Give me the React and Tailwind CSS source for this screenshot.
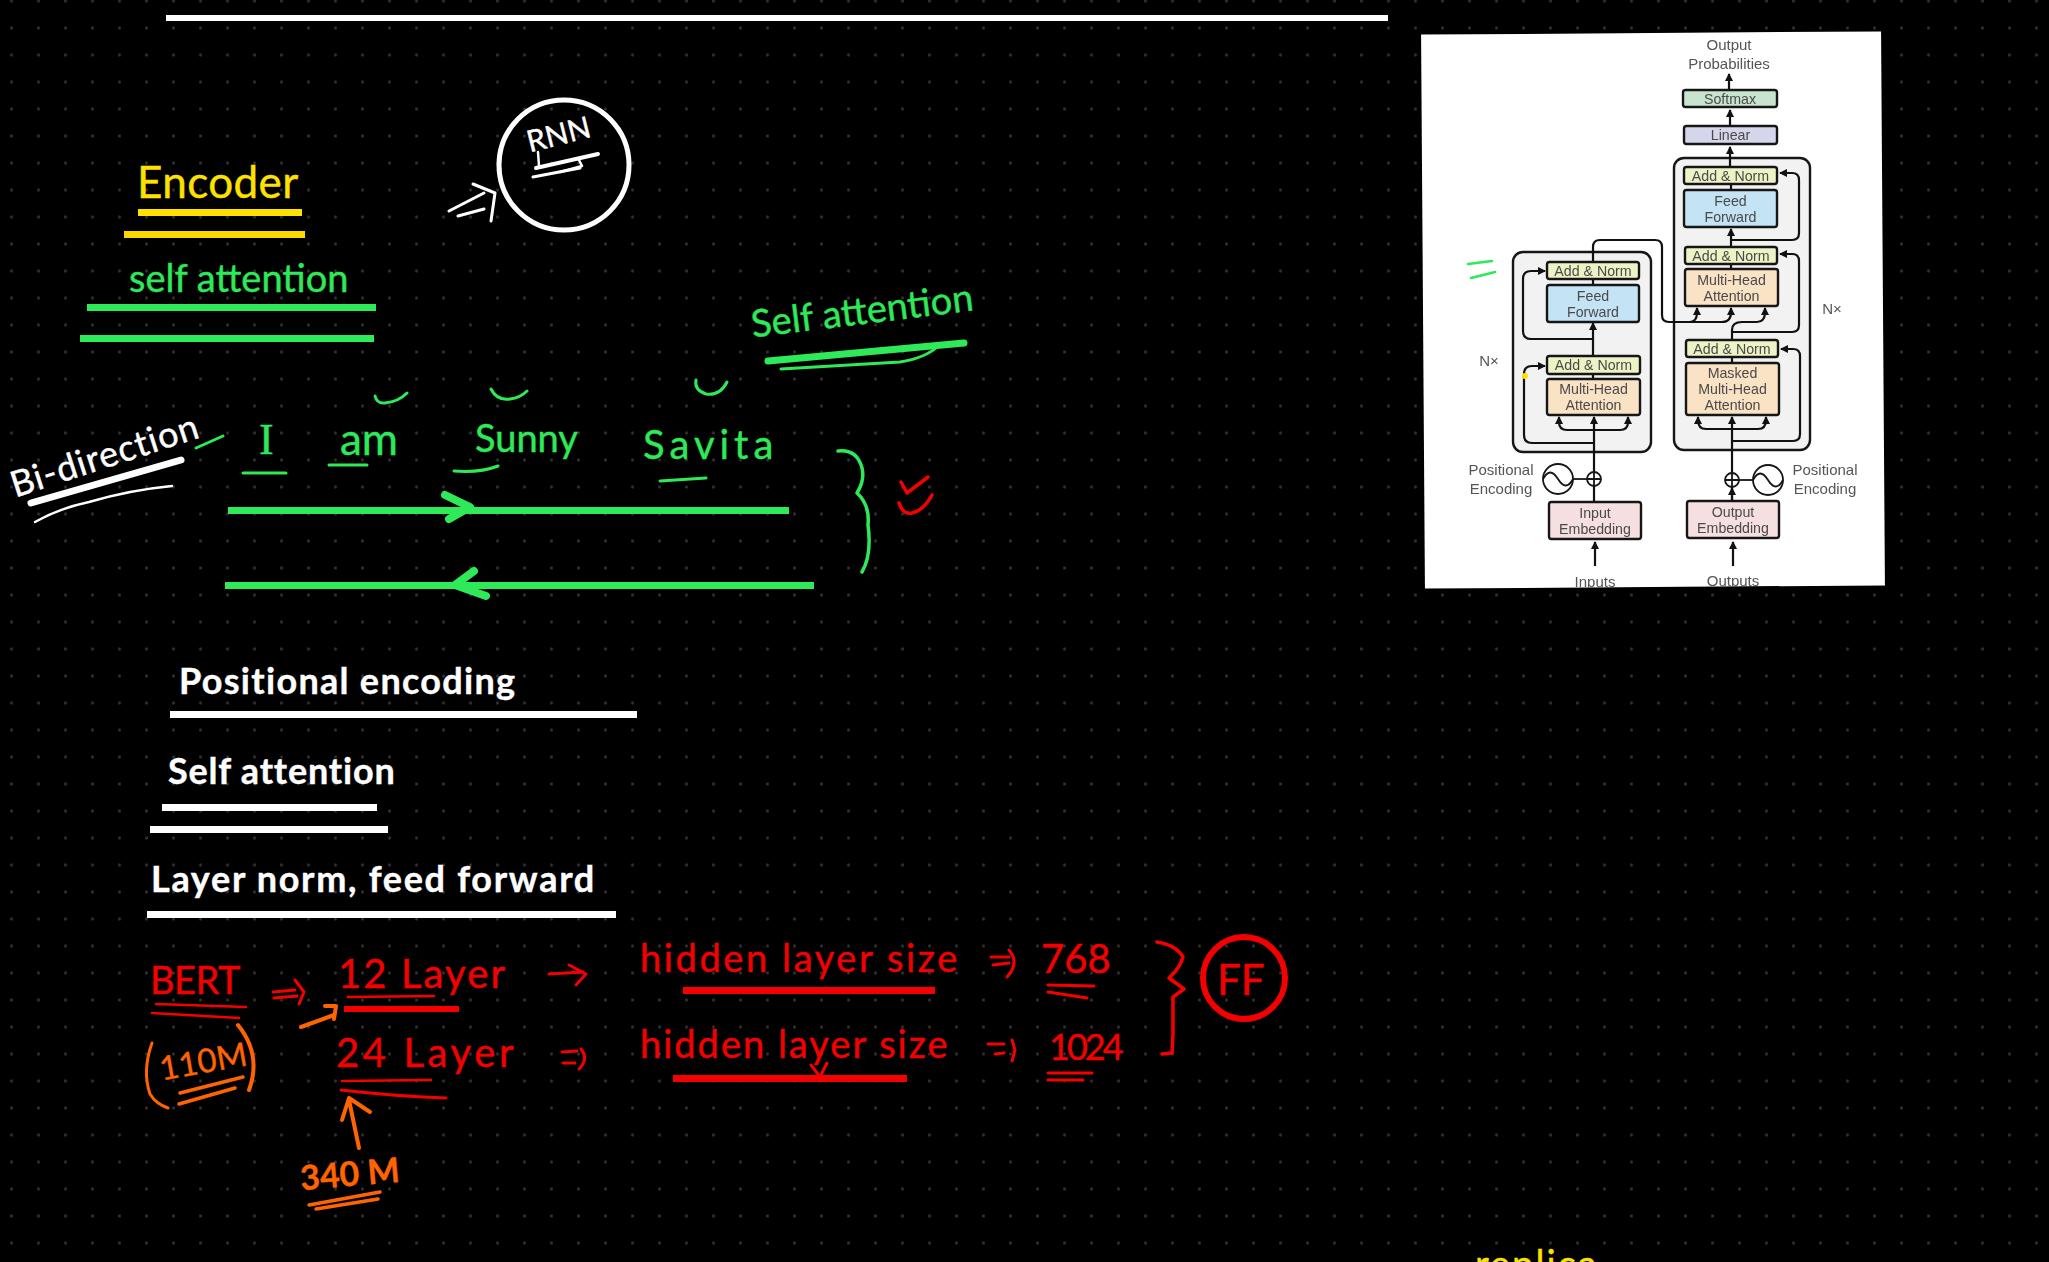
const ink = {
  yellow: '#ffe100',
  green: '#2ee958',
  red: '#f50000',
  orange: '#ff6400',
};

// freehand strokes on the board: [colour, width, path]
const strokes = [
  // rnn circle and arrow
  ['#fff', 4, 'M536 168 L598 154'],
  ['#fff', 2.5, 'M538 152 L539 166 M578 158 L582 166 L560 172'],
  ['#fff', 3, 'M533 177 L580 168'],
  ['#fff', 3, 'M449 211 L484 193 M458 216 L484 209 M473 184 L495 193 L491 221'],
  // bi-direction
  ['#fff', 7, 'M31 503 L181 460'],
  ['#fff', 2.5, 'M35 522 Q60 508 89 502 Q130 490 172 486'],
  [ink.green, 3, 'M196 448 L223 436'],
  // top right self attention
  [ink.green, 7, 'M768 361 L964 343'],
  [ink.green, 3, 'M781 369 Q850 365 900 362 Q925 358 937 347'],
  // ticks over the words
  [ink.green, 3, 'M375 396 Q377 404 385 403 Q398 402 407 393'],
  [ink.green, 3, 'M491 389 Q497 401 510 399 Q520 398 527 391'],
  [ink.green, 3, 'M696 380 Q694 390 706 394 Q720 396 727 382'],
  [ink.green, 3, 'M243 473 H286 M329 465 H367 M454 471 Q480 473 498 466 M660 481 L706 478'],
  // arrow heads on the long lines
  [ink.green, 8, 'M445 495 L470 507 L449 519'],
  [ink.green, 8, 'M474 571 L455 585 L486 596'],
  // brace + red ticks
  [ink.green, 3.5, 'M838 451 Q857 449 862 468 Q865 480 857 493 Q870 505 868 525 Q872 555 862 572'],
  [ink.red, 3.5, 'M901 482 L907 493 L928 477 M899 503 Q903 515 912 513 Q924 510 932 495'],
  // red row one
  [ink.red, 2.5, 'M156 1004 L246 1007 M152 1013 L239 1018'],
  [ink.red, 3, 'M273 992 L295 990 M274 998 L297 996 M295 980 L304 992 L299 1004'],
  [ink.red, 2.5, 'M348 997 L434 996'],
  [ink.red, 3, 'M549 974 L583 972 M569 965 L586 974 L576 985'],
  [ink.red, 3, 'M991 957 L1009 957 M993 965 L1009 963 M1009 950 Q1020 963 1007 977'],
  [ink.red, 3, 'M1048 985 L1094 986 M1048 992 L1087 998'],
  // red row two
  [ink.red, 2.5, 'M342 1081 L431 1080'],
  [ink.red, 3, 'M341 1090 Q391 1096 446 1098'],
  [ink.red, 3, 'M562 1052 L577 1051 M563 1063 L575 1063 M581 1049 Q589 1059 579 1069'],
  [ink.red, 3, 'M988 1044 L1004 1044 M995 1054 L1004 1053 M1012 1040 L1015 1050 L1012 1061'],
  [ink.red, 3, 'M811 1065 L820 1077 L827 1063'],
  [ink.red, 3, 'M1048 1073 H1092 M1048 1080 H1083'],
  [ink.red, 3.5, 'M1157 942 Q1176 945 1183 957 Q1180 968 1169 978 L1184 989 L1173 997 L1173 1033 L1172 1053 L1162 1054'],
  // orange
  [ink.orange, 4, 'M301 1027 L334 1015 M325 1006 L336 1006 L334 1019'],
  [ink.orange, 3, 'M152 1043 Q142 1071 150 1094 Q156 1104 168 1108'],
  [ink.orange, 4, 'M238 1025 Q262 1055 249 1090'],
  [ink.orange, 3.5, 'M180 1093 L243 1077 M179 1104 L235 1088'],
  [ink.orange, 4, 'M359 1148 L349 1100 M342 1120 L349 1098 L370 1112'],
  [ink.orange, 3.5, 'M309 1205 L380 1192 M316 1209 L378 1199'],
];

function Board() {
  return (
    <svg className="absolute inset-0" width="2049" height="1262" viewBox="0 0 2049 1262" fill="none">
      <ellipse cx="564" cy="165" rx="65" ry="65" stroke="#fff" strokeWidth="5" />
      <ellipse cx="1244" cy="978" rx="41" ry="41" stroke={ink.red} strokeWidth="6" />
      {strokes.map(([color, width, d], i) => (
        <path key={i} d={d} stroke={color} strokeWidth={width} strokeLinecap="round" strokeLinejoin="round" />
      ))}
    </svg>
  );
}

function Bar({ className }) {
  return <div className={`absolute ${className}`} />;
}

function Word({ className, children }) {
  return (
    <span className={`absolute whitespace-nowrap leading-none [-webkit-text-stroke:0.4px] font-['Lato','Noto_Sans',sans-serif] ${className}`}>
      {children}
    </span>
  );
}

function Box({ x, y, w, h, fill, lines }) {
  const cx = x + w / 2;
  const top = y + h / 2 - ((lines.length - 1) * 16) / 2 + 5;
  return (
    <g>
      <rect x={x} y={y} width={w} height={h} rx="2.5" fill={fill} stroke="#161616" strokeWidth="2.4" />
      {lines.map((line, i) => (
        <text key={line} x={cx} y={top + i * 16} textAnchor="middle" fontSize="14.2" fill="#4a4a4a">
          {line}
        </text>
      ))}
    </g>
  );
}

const add = '#eef3c6';
const blue = '#c4e3f5';
const peach = '#fae2c4';
const pink = '#f6dfe0';

// transformer figure, numbers are page coordinates
function Transformer() {
  const line = { stroke: '#111', strokeWidth: 2.2, fill: 'none', markerEnd: 'url(#head)' };
  const plain = { stroke: '#111', strokeWidth: 2.2, fill: 'none' };
  return (
    <svg
      className="absolute -left-[2px] top-0 rotate-[0.4deg] blur-[0.35px] font-['Liberation_Sans',Arial,sans-serif]"
      width="462"
      height="556"
      viewBox="1421 33 462 556"
    >
      <defs>
        <marker id="head" markerUnits="userSpaceOnUse" markerWidth="9" markerHeight="9" refX="7" refY="4" orient="auto">
          <path d="M0 0 L8 4 L0 8 Z" fill="#111" />
        </marker>
      </defs>

      <rect x="1513" y="252" width="138" height="200" rx="10" fill="#f2f2f2" stroke="#161616" strokeWidth="2.4" />
      <rect x="1674" y="158" width="136" height="292" rx="10" fill="#f2f2f2" stroke="#161616" strokeWidth="2.4" />

      <g>
        <path {...line} d="M1729 90 V74" />
        <path {...line} d="M1730 126 V110" />
        <path {...line} d="M1730 167 V147" />
        <path {...line} d="M1731 247 V229" />
        <path {...line} d="M1732 501 V417" />
        <path {...line} d="M1732 501 V488" />
        <path {...line} d="M1733 566 V542" />
        <path {...line} d="M1731 240 H1792 Q1799 240 1799 233 V180 Q1799 173 1792 173 H1780" />
        <path {...line} d="M1732 332 H1792 Q1799 332 1799 325 V261 Q1799 254 1792 254 H1780" />
        <path {...line} d="M1732 441 H1793 Q1800 441 1800 434 V356 Q1800 349 1793 349 H1781" />
        <path {...line} d="M1732 429 H1706 Q1698 429 1698 420 V417" />
        <path {...line} d="M1732 429 H1758 Q1766 429 1766 420 V417" />
        <path {...line} d="M1732 340 V330 Q1732 322 1742 322 H1757 Q1765 322 1765 312 V308" />
        <path {...line} d="M1593 262 V247 Q1593 240 1600 240 H1655 Q1662 240 1662 247 V315 Q1662 322 1669 322 H1722 Q1731 322 1731 312 V308" />
        <path {...line} d="M1690 322 Q1697 322 1697 312 V308" />

        <path {...line} d="M1593 356 V323" />
        <path {...plain} d="M1593 285 V279 M1593 379 V374 M1731 190 V184 M1731 269 V264 M1732 363 V357" />
        <path {...line} d="M1594 502 V417" />
        <path {...line} d="M1595 566 V542" />
        <path {...line} d="M1593 339 H1531 Q1523 339 1523 331 V279 Q1523 271 1531 271 H1545" />
        <path {...line} d="M1594 443 H1532 Q1524 443 1524 435 V374 Q1524 366 1532 366 H1545" />
        <path {...line} d="M1594 430 H1567 Q1559 430 1559 422 V417" />
        <path {...line} d="M1594 430 H1620 Q1628 430 1628 422 V417" />
      </g>

      <Box x={1683} y={90} w={94} h={17} fill="#c8e4cf" lines={['Softmax']} />
      <Box x={1684} y={126} w={93} h={18} fill="#d5d6ec" lines={['Linear']} />
      <Box x={1684} y={167} w={93} h={17} fill={add} lines={['Add & Norm']} />
      <Box x={1684} y={190} w={93} h={37} fill={blue} lines={['Feed', 'Forward']} />
      <Box x={1685} y={247} w={92} h={17} fill={add} lines={['Add & Norm']} />
      <Box x={1685} y={269} w={93} h={37} fill={peach} lines={['Multi-Head', 'Attention']} />
      <Box x={1686} y={340} w={92} h={17} fill={add} lines={['Add & Norm']} />
      <Box x={1686} y={363} w={93} h={52} fill={peach} lines={['Masked', 'Multi-Head', 'Attention']} />
      <Box x={1687} y={501} w={92} h={37} fill={pink} lines={['Output', 'Embedding']} />

      <Box x={1547} y={262} w={92} h={17} fill={add} lines={['Add & Norm']} />
      <Box x={1547} y={285} w={92} h={37} fill={blue} lines={['Feed', 'Forward']} />
      <Box x={1547} y={356} w={93} h={18} fill={add} lines={['Add & Norm']} />
      <Box x={1547} y={379} w={93} h={36} fill={peach} lines={['Multi-Head', 'Attention']} />
      <Box x={1549} y={502} w={92} h={37} fill={pink} lines={['Input', 'Embedding']} />

      {/* positional encoding, left and right */}
      <g fill="none" stroke="#161616" strokeWidth="1.8">
        <ellipse cx="1558" cy="479" rx="15" ry="15" />
        <path d="M1543 479 Q1550 466 1558 479 T1573 479" />
        <path d="M1573 479 H1587" />
        <circle cx="1594" cy="479" r="7" fill="#fff" />
        <path d="M1587 479 H1601 M1594 472 V486" />
        <ellipse cx="1768" cy="480" rx="15" ry="15" />
        <path d="M1753 480 Q1760 467 1768 480 T1783 480" />
        <path d="M1739 480 H1753" />
        <circle cx="1732" cy="480" r="7" fill="#fff" />
        <path d="M1725 480 H1739 M1732 473 V487" />
      </g>

      <g fontSize="15" fill="#555" textAnchor="middle">
        <text x="1729" y="50">Output</text>
        <text x="1729" y="69">Probabilities</text>
        <text x="1489" y="366">N×</text>
        <text x="1832" y="314">N×</text>
        <text x="1501" y="475">Positional</text>
        <text x="1501" y="494">Encoding</text>
        <text x="1825" y="475">Positional</text>
        <text x="1825" y="494">Encoding</text>
        <text x="1595" y="587">Inputs</text>
        <text x="1733" y="586">Outputs</text>
      </g>

      <path d="M1468 264 L1492 261 M1471 278 L1495 272" stroke={ink.green} strokeWidth="2.6" strokeLinecap="round" />
      <circle cx="1525" cy="376" r="3" fill={ink.yellow} />
    </svg>
  );
}

export default function App() {
  return (
    <div className="relative w-[2049px] h-[1262px] overflow-hidden bg-black bg-[radial-gradient(circle,#323232_1.2px,transparent_1.7px)] bg-[size:27px_27px] bg-[position:-2px_-12.5px]">
      {/* straight ruled lines */}
      <Bar className="left-[166px] top-[15px] w-[1222px] h-[6px] bg-white" />
      <Bar className="left-[138px] top-[209px] w-[164px] h-[7px] bg-[#ffe100]" />
      <Bar className="left-[124px] top-[231px] w-[181px] h-[7px] bg-[#ffd800]" />
      <Bar className="left-[87px] top-[304px] w-[289px] h-[7px] bg-[#2ee958]" />
      <Bar className="left-[80px] top-[335px] w-[294px] h-[7px] bg-[#2ee958]" />
      <Bar className="left-[228px] top-[507px] w-[561px] h-[7px] bg-[#2ee958]" />
      <Bar className="left-[225px] top-[582px] w-[589px] h-[7px] bg-[#2ee958]" />
      <Bar className="left-[170px] top-[711px] w-[467px] h-[7px] bg-white" />
      <Bar className="left-[162px] top-[804px] w-[215px] h-[7px] bg-white" />
      <Bar className="left-[150px] top-[826px] w-[238px] h-[7px] bg-white" />
      <Bar className="left-[147px] top-[911px] w-[469px] h-[7px] bg-white" />
      <Bar className="left-[344px] top-[1006px] w-[115px] h-[6px] bg-[#f50000]" />
      <Bar className="left-[683px] top-[987px] w-[252px] h-[7px] bg-[#f50000]" />
      <Bar className="left-[673px] top-[1075px] w-[234px] h-[7px] bg-[#f50000]" />

      <Board />

      {/* handwriting */}
      <Word className="left-[137px] top-[159px] text-[44px] tracking-[0.4px] text-[#ffe100]">Encoder</Word>
      <Word className="left-[129px] top-[258px] text-[38px] text-[#2ee958]">self attention</Word>
      <Word className="left-[526px] top-[118px] text-[30px] text-white -rotate-[14deg]">RNN</Word>
      <Word className="left-[750px] top-[290px] text-[38px] text-[#2ee958] -rotate-[7deg]">Self attention</Word>
      <Word className="left-[6px] top-[436px] text-[36px] tracking-[1px] text-white -rotate-[18deg]">Bi-direction</Word>
      <Word className="left-[259px] top-[418px] text-[44px] font-['Liberation_Serif'] text-[#2ee958]">I</Word>
      <Word className="left-[340px] top-[416px] text-[44px] text-[#2ee958]">am</Word>
      <Word className="left-[475px] top-[418px] text-[38px] text-[#2ee958]">Sunny</Word>
      <Word className="left-[643px] top-[424px] text-[40px] tracking-[5px] text-[#2ee958]">Savita</Word>

      <Word className="left-[179px] top-[662px] text-[36px] font-bold tracking-[1.3px] text-white">Positional encoding</Word>
      <Word className="left-[168px] top-[752px] text-[36px] font-bold tracking-[0.8px] text-white">Self attention</Word>
      <Word className="left-[151px] top-[860px] text-[36px] font-bold tracking-[1.7px] text-white">Layer norm, feed forward</Word>

      <Word className="left-[150px] top-[960px] text-[38px] tracking-[-0.5px] text-[#f50000]">BERT</Word>
      <Word className="left-[338px] top-[953px] text-[40px] tracking-[2.1px] text-[#f50000]">12 Layer</Word>
      <Word className="left-[640px] top-[938px] text-[38px] tracking-[2.6px] text-[#f50000]">hidden layer size</Word>
      <Word className="left-[1041px] top-[938px] text-[40px] text-[#f50000]">768</Word>
      <Word className="left-[336px] top-[1032px] text-[40px] tracking-[3.6px] text-[#f50000]">24 Layer</Word>
      <Word className="left-[640px] top-[1024px] text-[38px] tracking-[2px] text-[#f50000]">hidden layer size</Word>
      <Word className="left-[1049px] top-[1028px] text-[36px] tracking-[-3px] text-[#f50000]">1024</Word>
      <Word className="left-[1217px] top-[958px] text-[42px] text-[#f50000]">FF</Word>

      <Word className="left-[159px] top-[1044px] text-[33px] text-[#ff6400] -rotate-[10deg]">110M</Word>
      <Word className="left-[300px] top-[1156px] text-[34px] font-bold text-[#ff6400] -rotate-[5deg]">340 M</Word>
      <Word className="left-[1475px] top-[1244px] text-[38px] tracking-[2px] text-[#ffe100]">replica</Word>

      {/* pasted figure, sits a little crooked on the board */}
      <div className="absolute left-[1423px] top-[33px] w-[460px] h-[554px] bg-white -rotate-[0.4deg] overflow-hidden">
        <Transformer />
      </div>
    </div>
  );
}
